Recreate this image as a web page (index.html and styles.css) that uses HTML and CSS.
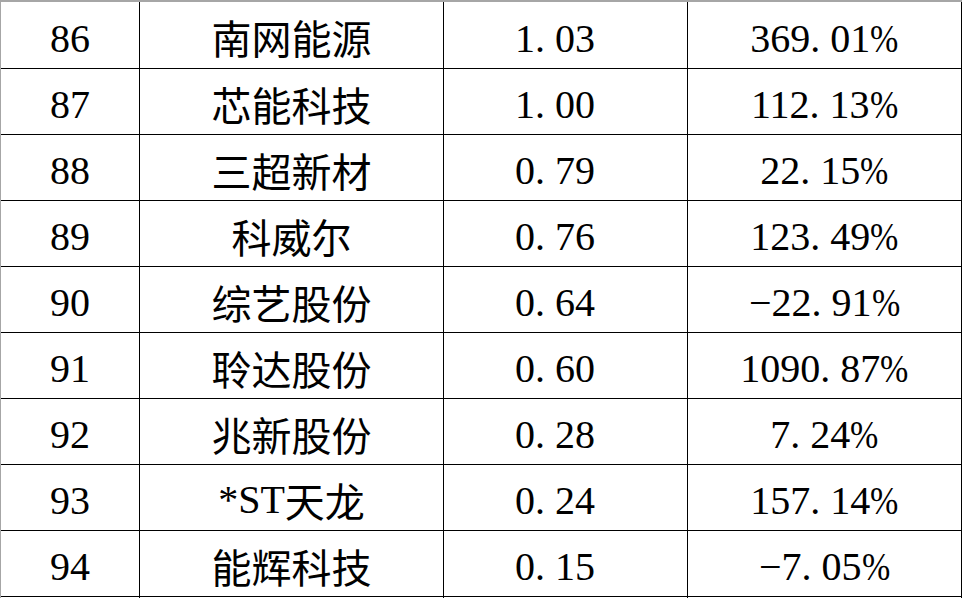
FILE: index.html
```html
<!DOCTYPE html>
<html>
<head>
<meta charset="utf-8">
<title>排名表</title>
<link rel="stylesheet" href="styles.css">
</head>
<body>
<div class="sheet">
  <div class="cell c1">86</div><div class="cell c2">南网能源</div><div class="cell c3">1<span class="dot">.</span>03</div><div class="cell c4">369<span class="dot">.</span>01<span class="pct">%</span></div>
  <div class="cell c1">87</div><div class="cell c2">芯能科技</div><div class="cell c3">1<span class="dot">.</span>00</div><div class="cell c4">112<span class="dot">.</span>13<span class="pct">%</span></div>
  <div class="cell c1">88</div><div class="cell c2">三超新材</div><div class="cell c3">0<span class="dot">.</span>79</div><div class="cell c4">22<span class="dot">.</span>15<span class="pct">%</span></div>
  <div class="cell c1">89</div><div class="cell c2">科威尔</div><div class="cell c3">0<span class="dot">.</span>76</div><div class="cell c4">123<span class="dot">.</span>49<span class="pct">%</span></div>
  <div class="cell c1">90</div><div class="cell c2">综艺股份</div><div class="cell c3">0<span class="dot">.</span>64</div><div class="cell c4">−22<span class="dot">.</span>91<span class="pct">%</span></div>
  <div class="cell c1">91</div><div class="cell c2">聆达股份</div><div class="cell c3">0<span class="dot">.</span>60</div><div class="cell c4">1090<span class="dot">.</span>87<span class="pct">%</span></div>
  <div class="cell c1">92</div><div class="cell c2">兆新股份</div><div class="cell c3">0<span class="dot">.</span>28</div><div class="cell c4">7<span class="dot">.</span>24<span class="pct">%</span></div>
  <div class="cell c1">93</div><div class="cell c2"><span class="lat">*ST</span>天龙</div><div class="cell c3">0<span class="dot">.</span>24</div><div class="cell c4">157<span class="dot">.</span>14<span class="pct">%</span></div>
  <div class="cell c1">94</div><div class="cell c2">能辉科技</div><div class="cell c3">0<span class="dot">.</span>15</div><div class="cell c4">−7<span class="dot">.</span>05<span class="pct">%</span></div>
  <div class="cell c1 last"></div><div class="cell c2 last"></div><div class="cell c3 last"></div><div class="cell c4 last"></div>
</div>
</body>
</html>
```

FILE: styles.css
```css
html, body {
  margin: 0;
  padding: 0;
  background: #ffffff;
}

body {
  width: 962px;
  height: 598px;
  overflow: hidden;
  font-family: "Liberation Serif", "DejaVu Serif", "Times New Roman", serif;
  font-size: 40px;
  color: #000000;
}

.sheet {
  display: grid;
  grid-template-columns: 139px 304px 244px 274px;
  grid-template-rows: 67px repeat(8, 66px) 2px;
  border-top: 2px solid #a6a6a6;
  border-left: 1px solid #a6a6a6;
}

.cell {
  box-sizing: border-box;
  display: flex;
  align-items: center;
  justify-content: center;
  border-right: 1px solid #000000;
  border-bottom: 1px solid #000000;
  padding-top: 7px;
  line-height: 1;
  white-space: nowrap;
  font-family: "Liberation Serif", "DejaVu Serif", serif;
}

.c2 {
  font-family: "Noto Sans CJK SC", sans-serif;
  padding-top: 4px;
}

.c2 .lat {
  font-family: "Liberation Serif", serif;
}

.c3 {
  padding-right: 21px;
}

.dot {
  display: inline-block;
  width: 0.5em;
}

.pct {
  display: inline-block;
  transform: scaleX(0.85);
  transform-origin: left center;
  margin-right: -5px;
}

.last {
  border-bottom: none;
  padding: 0;
}
```
